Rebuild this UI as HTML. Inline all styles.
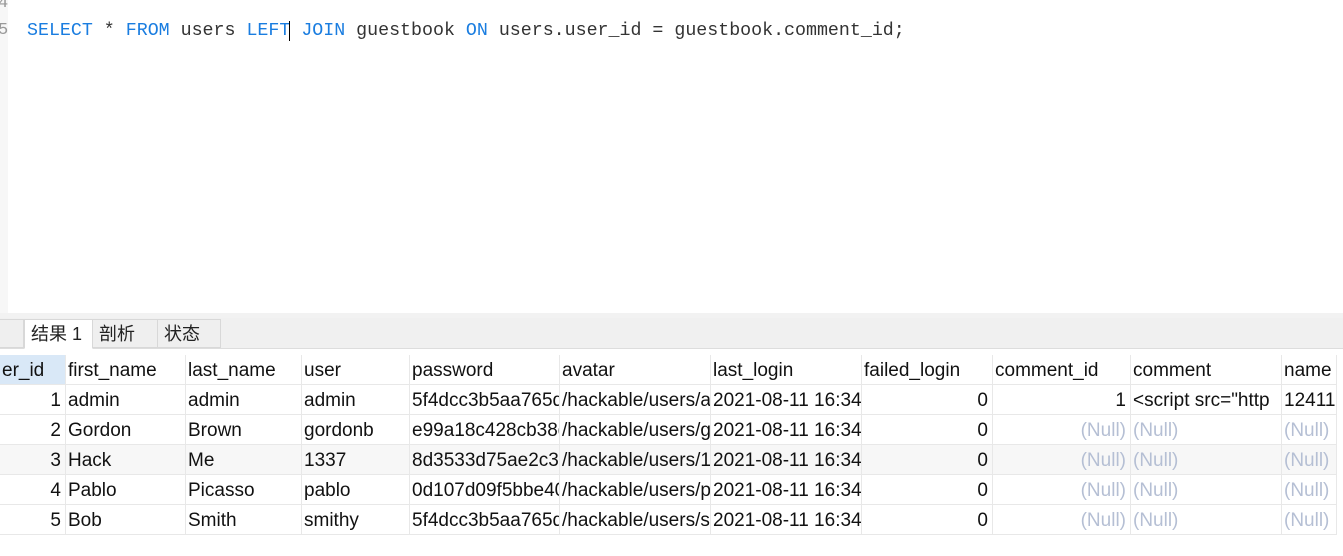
<!DOCTYPE html>
<html><head><meta charset="utf-8"><style>
body{margin:0;width:1343px;height:556px;background:#fff;position:relative;overflow:hidden;font-family:"Liberation Sans","Noto Sans CJK SC",sans-serif;}
.gut{position:absolute;left:0;top:0;width:8px;height:313px;background:#f7f7f7;}
.ln{position:absolute;left:-2px;font:17px "Liberation Mono",monospace;color:#999;}
.sql{position:absolute;left:27px;top:21px;font:18.3px "Liberation Mono",monospace;color:#333;white-space:pre;letter-spacing:0;}
.k{color:#1a7de0}
.sep{position:absolute;left:0;top:313px;width:1343px;height:5px;background:#f2f2f2;}
.tabbar{position:absolute;left:0;top:318px;width:1343px;height:30px;background:#f0f0f0;border-bottom:1px solid #ddd;}
.tab{position:absolute;top:319px;height:29px;font-size:18px;line-height:29px;padding-left:6px;box-sizing:border-box;border:1px solid #d8d8d8;background:#efefef;color:#222;}
.c{position:absolute;height:30px;line-height:32px;font-size:19px;color:#111;overflow:hidden;white-space:nowrap;box-sizing:border-box;padding:0 2px;border-right:1px solid #e8e8e8;border-bottom:1px solid #e8e8e8;}
.r{text-align:right;padding-right:4px}
.n{color:#b5bfd4}
</style></head><body>
<div class="gut"></div>
<div class="ln" style="top:-6px">4</div>
<div class="ln" style="top:21px">5</div>
<div class="sql"><span class="k">SELECT</span> * <span class="k">FROM</span> users <span class="k">LEFT</span><span style="border-left:1px solid #000;margin-left:-1px"></span> <span class="k">JOIN</span> guestbook <span class="k">ON</span> users.user_id = guestbook.comment_id;</div>
<div class="sep"></div>
<div class="tabbar"></div>
<div class="tab" style="left:-10px;width:34px"></div>
<div class="tab" style="left:24px;width:69px;background:#fff;border-bottom-color:#fff;height:30px">结果 1</div>
<div class="tab" style="left:92px;width:66px">剖析</div>
<div class="tab" style="left:157px;width:64px">状态</div>
<div id="g"></div>
<script>
var xs=[0,66,186,302,410,560,711,862,993,1131,1282,1337];
var hd=["er_id","first_name","last_name","user","password","avatar","last_login","failed_login","comment_id","comment","name"];
var rows=[["1","admin","admin","admin","5f4dcc3b5aa765d61d","/hackable/users/admin.jpg","2021-08-11 16:34:00","0","1",'<script src="http',"12411"],
["2","Gordon","Brown","gordonb","e99a18c428cb38d5f2","/hackable/users/gordonb.jpg","2021-08-11 16:34:00","0",null,null,null],
["3","Hack","Me","1337","8d3533d75ae2c3966d","/hackable/users/1337.jpg","2021-08-11 16:34:00","0",null,null,null],
["4","Pablo","Picasso","pablo","0d107d09f5bbe40cad","/hackable/users/pablo.jpg","2021-08-11 16:34:00","0",null,null,null],
["5","Bob","Smith","smithy","5f4dcc3b5aa765d61d","/hackable/users/smithy.jpg","2021-08-11 16:34:00","0",null,null,null]];
var right=[0,7,8];var h="";
function cell(i,y,t,cls,bg){h+='<div class="c '+cls+'" style="left:'+xs[i]+'px;top:'+y+'px;width:'+(xs[i+1]-xs[i])+'px;'+(bg?'background:'+bg:'')+'">'+t+'</div>';}
hd.forEach(function(t,i){cell(i,355,t,"",i==0?"#d9e8f7":"");});
rows.forEach(function(r,j){var y=385+j*30;var bg=j==2?"#f7f7f7":"";
r.forEach(function(t,i){var c=right.indexOf(i)>=0?"r":"";if(t===null){t="(Null)";c=(i==8?"r ":"")+"n";}
t=t.replace(/</g,"&lt;");cell(i,y,t,c,bg);});});
document.getElementById("g").innerHTML=h;
</script>
</body></html>
